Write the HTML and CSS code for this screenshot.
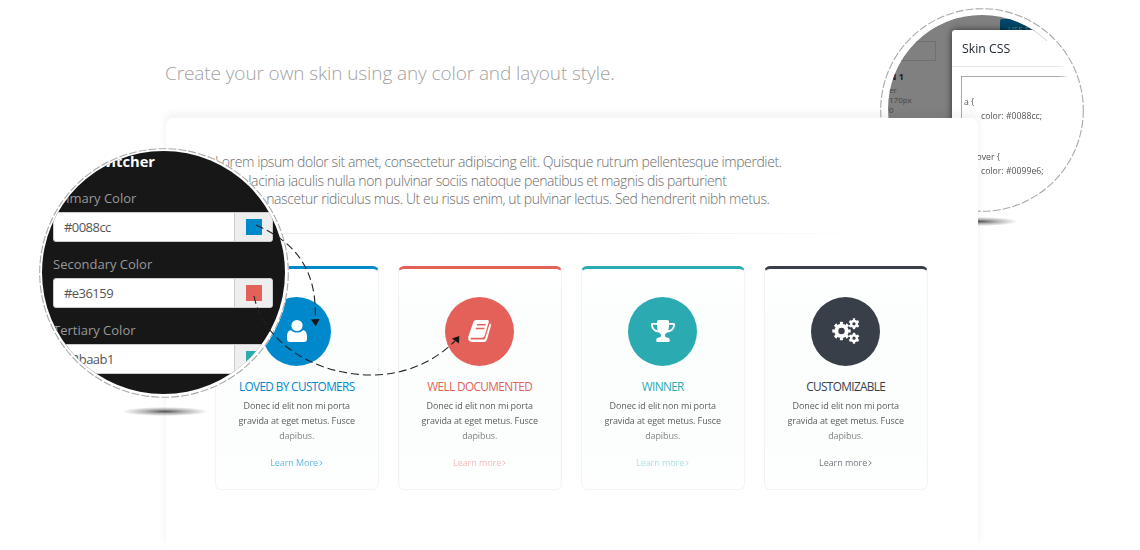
FILE: index.html
```html
<!DOCTYPE html>
<html lang="en">
<head>
<meta charset="utf-8">
<title>Skin switcher</title>
<link rel="stylesheet" href="styles.css">
</head>
<body>
<main class="stage">
  <h1 class="headline">Create your own skin using any color and layout style.</h1>

  <aside class="lens lens-css">
    <div class="lens-view css-view">
      <div class="page-behind">
        <span class="save">USE SKIN</span>
        <div class="field"></div>
        <div class="facts"><b>N 1</b><span>er</span><span>170px</span><span>0</span></div>
      </div>
      <div class="modal">
        <h2>Skin CSS</h2>
        <pre class="code">a {
<span>color: #0088cc;</span>


a:hover {
<span>color: #0099e6;</span></pre>
      </div>
    </div>
    <svg class="ring" viewBox="0 0 204 204"><circle cx="102" cy="102" r="101.3"/></svg>
  </aside>
  <i class="shade shade-css"></i>

  <section class="panel">
    <p class="intro">Lorem ipsum dolor sit amet, consectetur adipiscing elit. Quisque rutrum pellentesque imperdiet.<br>Nulla lacinia iaculis nulla non pulvinar sociis natoque penatibus et magnis dis parturient<br>montes, nascetur ridiculus mus. Ut eu risus enim, ut pulvinar lectus. Sed hendrerit nibh metus.</p>
    <hr class="rule">
    <div class="cards">
      <article class="card primary">
        <div class="badge"><svg viewBox="0 0 24 24"><path d="M6 11.2C3.500 11.200 2 13.500 2 17.500v2.500q0 3 3 3h14q3 0 3-3v-2.500c0-4-1.500-6.300-4-6.300-1.500 1.400-3.500 2.300-6 2.300s-4.500-.9-6-2.300z"/><circle cx="12" cy="6.500" r="5.600"/></svg></div>
        <h3>LOVED BY CUSTOMERS</h3>
        <p>Donec id elit non mi porta<br>gravida at eget metus. Fusce<br>dapibus.</p>
        <a>Learn More <svg viewBox="0 0 4 6"><path d="M.7.5 3.200 3 .7 5.500"/></svg></a>
      </article>
      <article class="card secondary">
        <div class="badge"><svg viewBox="0 0 24 24"><path fill-rule="evenodd" d="M8.500 1h10.600q2.200 0 1.600 2.200L16.500 17q-.5 1.700-2.300 1.700H3.500q-1 0-1.100.8.1.9 1.300.9h11.500q1.500 0 2-1.500L21.700 4.600q1.700.5 1.200 2.300L19 20.500q-.7 2.500-3.200 2.500H3.700Q-.4 22.400.3 17.800L5.200 3.400Q5.800 1 8.500 1zM9.300 5l-.5 1.500h8.600l.5-1.500zM8.100 8.700l-.5 1.500h8.600l.5-1.500z"/></svg></div>
        <h3>WELL DOCUMENTED</h3>
        <p>Donec id elit non mi porta<br>gravida at eget metus. Fusce<br>dapibus.</p>
        <a>Learn more <svg viewBox="0 0 4 6"><path d="M.7.5 3.200 3 .7 5.500"/></svg></a>
      </article>
      <article class="card tertiary">
        <div class="badge"><svg viewBox="0 0 24 24"><path fill-rule="evenodd" d="M6 4V2.500Q6 1 7.700 1h8.600Q18 1 18 2.500V4h4.500q1.500 0 1.500 1.400c0 4.300-3.100 7.600-8 8.100-1 .9-2 1.600-2 3.100 0 1.600.7 1.900 2 1.900 1.700 0 2.700.8 2.700 2.500v1q0 1-1 1H6.300q-1 0-1-1v-1c0-1.700 1-2.500 2.700-2.500 1.300 0 2-.3 2-1.900 0-1.500-1-2.200-2-3.100-4.900-.5-8-3.800-8-8.100Q0 4 1.500 4zm0 1.800H1.800c.1 2.900 2 5.100 5 5.700C6.200 10 6 8.200 6 5.800zm12 0c0 2.400-.2 4.200-.8 5.700 3-.6 4.900-2.800 5-5.700z"/></svg></div>
        <h3>WINNER</h3>
        <p>Donec id elit non mi porta<br>gravida at eget metus. Fusce<br>dapibus.</p>
        <a>Learn more <svg viewBox="0 0 4 6"><path d="M.7.5 3.200 3 .7 5.500"/></svg></a>
      </article>
      <article class="card quaternary">
        <div class="badge"><svg class="cogs" viewBox="0 0 28 26">
          <circle cx="9.500" cy="13" r="5.200" stroke-width="4"/><circle cx="9.500" cy="13" r="7.800" stroke-width="2.800" pathLength="80" stroke-dasharray="5 5" stroke-dashoffset="2.500"/>
          <circle cx="22" cy="5.800" r="2.900" stroke-width="2.500"/><circle cx="22" cy="5.800" r="4.500" stroke-width="1.900" pathLength="60" stroke-dasharray="5 5" stroke-dashoffset="-2.500"/>
          <circle cx="22" cy="20.200" r="2.900" stroke-width="2.500"/><circle cx="22" cy="20.200" r="4.500" stroke-width="1.900" pathLength="60" stroke-dasharray="5 5" stroke-dashoffset="-2.500"/>
        </svg></div>
        <h3>CUSTOMIZABLE</h3>
        <p>Donec id elit non mi porta<br>gravida at eget metus. Fusce<br>dapibus.</p>
        <a>Learn more <svg viewBox="0 0 4 6"><path d="M.7.5 3.200 3 .7 5.500"/></svg></a>
      </article>
    </div>
  </section>

  <aside class="lens lens-switcher">
    <div class="lens-view switcher">
      <h2>Style Switcher</h2>
      <div class="row"><label>Primary Color</label><div class="input"><span>#0088cc</span><i class="primary"></i></div></div>
      <div class="row"><label>Secondary Color</label><div class="input"><span>#e36159</span><i class="secondary"></i></div></div>
      <div class="row"><label>Tertiary Color</label><div class="input"><span>#2baab1</span><i class="tertiary"></i></div></div>
    </div>
    <svg class="ring" viewBox="0 0 250 250"><circle cx="125" cy="125" r="124.300"/></svg>
  </aside>
  <i class="shade shade-switcher"></i>

  <svg class="arrows" viewBox="0 0 1140 550">
    <path class="trail" d="M256 225C293 241 318 268 315 320"/>
    <path d="M311 319.500l8.500-.5-3.800 7.500z"/>
    <path class="trail" d="M254 296C263 340 310 373 368 375 403 376 434 362 455 341"/>
    <path d="M452 338.500l7.300-2.500-.3 7.600z"/>
  </svg>
</main>
</body>
</html>
```
FILE: styles.css
```css
* { box-sizing: border-box; }
body { margin: 0; background: #fff; font-family: "Open Sans", "Noto Sans", sans-serif; color: #777; }
h1, h2, h3, p, pre { margin: 0; font-weight: 400; }
.stage { position: relative; width: 1140px; height: 550px; overflow: hidden; padding: 58px 162px 0 165px; }
.headline { height: 60px; font-size: 19px; line-height: 30px; font-weight: 300; color: #a2a2a2; white-space: nowrap; letter-spacing: -.1px; }
.primary { --c: #0088cc; --fade: .6; }
.secondary { --c: #e36159; --fade: .42; }
.tertiary { --c: #2baab1; --fade: .38; }
.quaternary { --c: #383f48; --fade: .7; }

.panel { position: relative; width: 812px; height: 427px; margin-left: 1px; padding: 35px 50px 0 49px; background: #fff; border-radius: 7px 7px 0 0; box-shadow: 0 -4px 7px 2px rgba(0,0,0,.045); }
.intro { font-size: 14px; line-height: 18.500px; font-weight: 300; letter-spacing: -.4px; color: #6c6c6c; white-space: nowrap; }
.rule { height: 1px; margin: 24.500px 0 32px; border: 0; background: linear-gradient(90deg, #eee, #eaeaea 50%, transparent 93%); }
.cards { display: grid; grid-template-columns: repeat(4, 163.500px); gap: 19.500px; }
.card { height: 224px; padding-top: 27.500px; display: flex; flex-direction: column; align-items: center; border: 1px solid #f3f3f3; border-top: 3px solid var(--c); border-radius: 6px; background: linear-gradient(#fff, #fcfefe 20%, #fcfefe 80%, #fefefe); text-align: center; }
.badge { width: 69px; height: 69px; flex: none; border-radius: 50%; background: var(--c); display: grid; place-items: center; }
.badge svg { width: 24px; height: 24px; fill: #fff; }
.badge .cogs { width: 28px; height: 26px; fill: none; stroke: #fff; }
.card h3 { margin-top: 12.500px; font-size: 11.800px; line-height: 16px; letter-spacing: -.63px; color: var(--c); }
.card p { margin-top: 4px; font-size: 9px; line-height: 15px; letter-spacing: -.1px; color: #5c5c5c; white-space: nowrap; mask-image: linear-gradient(#000 60%, rgba(0,0,0,.65)); }
.card a { margin-top: 13px; font-size: 9px; line-height: 14px; letter-spacing: -.06px; color: var(--c); opacity: var(--fade); }
.card a svg { width: 4px; height: 6px; margin-left: -1px; fill: none; stroke: currentColor; }

.lens { position: absolute; border-radius: 50%; background: #fff; }
.lens-view { position: absolute; border-radius: 50%; overflow: hidden; }
.ring { position: absolute; inset: 0; width: 100%; height: 100%; fill: none; stroke: #aaa; stroke-width: 1.100; stroke-dasharray: 8 2; }
.shade { position: absolute; height: 9px; background: radial-gradient(closest-side, #555, rgba(100,100,100,.5) 45%, transparent); }

.lens-switcher { left: 39px; top: 148px; width: 250px; height: 250px; }
.lens-switcher .lens-view { inset: 3px 4px 4px 3px; }
.switcher { padding: 0 12px 0 11px; background: #171717; }
.switcher h2 { width: 102px; height: 35px; display: flex; justify-content: flex-end; font-size: 14.700px; line-height: 20px; font-weight: 700; color: #fff; white-space: nowrap; }
.row { height: 66px; }
.row label { display: block; height: 26px; font-size: 13px; line-height: 24px; color: #999; }
.input { width: 220px; height: 30px; display: flex; justify-content: space-between; background: #fff; border: 1px solid #ccc; border-radius: 3px; overflow: hidden; }
.input span { padding-left: 10px; font-size: 13px; line-height: 29px; letter-spacing: -.55px; color: #555; }
.input i { width: 38px; background: linear-gradient(var(--c), var(--c)) 11px 6px / 16px 16px no-repeat #eee; border-left: 1px solid #ccc; }
.shade-switcher { left: 122px; top: 407px; width: 86px; }

.lens-css { left: 880px; top: 8px; width: 204px; height: 204px; }
.lens-css .lens-view { inset: 7px 8px 9px; }
.page-behind { width: 72px; height: 120px; display: flex; flex-direction: column; align-items: flex-start; background: #808080; font-size: 8px; color: #444; }
.css-view { background: linear-gradient(#808080 15px, #fff 15px); }
.save { width: 76px; height: 22px; flex: none; margin: 4px 0 0 112px; padding: 4px 8px; border-radius: 2px; background: #00466a; color: #7894a2; line-height: 12px; }
.field { width: 48px; height: 20px; border: 1px solid #707070; }
.facts { margin: 9px 0 0 1px; display: flex; flex-direction: column; line-height: 10px; }
.facts b { height: 15px; font-size: 9px; line-height: 13px; color: #171b23; }
.modal { position: absolute; left: 64px; top: 15px; width: 140px; height: 190px; background: #fff; border-radius: 3px 0 0; box-shadow: 0 0 7px rgba(0,0,0,.65); }
.modal h2 { height: 37px; padding-left: 10px; font-size: 12.300px; line-height: 37px; color: #222932; border-bottom: 1px solid #e8e8e8; mask-image: linear-gradient(90deg, #000 105px, transparent 115px); }
.code { height: 150px; margin: 9px 0 0 9px; padding: 19px 0 0 2px; border: solid #aaa; border-width: 1px 0 0 1px; font: 8.700px/13.700px "Open Sans", sans-serif; color: #555; mask-image: linear-gradient(90deg, #000 97px, transparent 108px); }
.code span { margin-left: 17px; }
.shade-css { left: 940px; top: 217px; width: 78px; }
.arrows { position: absolute; inset: 0; width: 1140px; height: 550px; fill: #151515; pointer-events: none; }
.trail { fill: none; stroke: #222; stroke-width: 1.100; stroke-dasharray: 8 4; }
```
